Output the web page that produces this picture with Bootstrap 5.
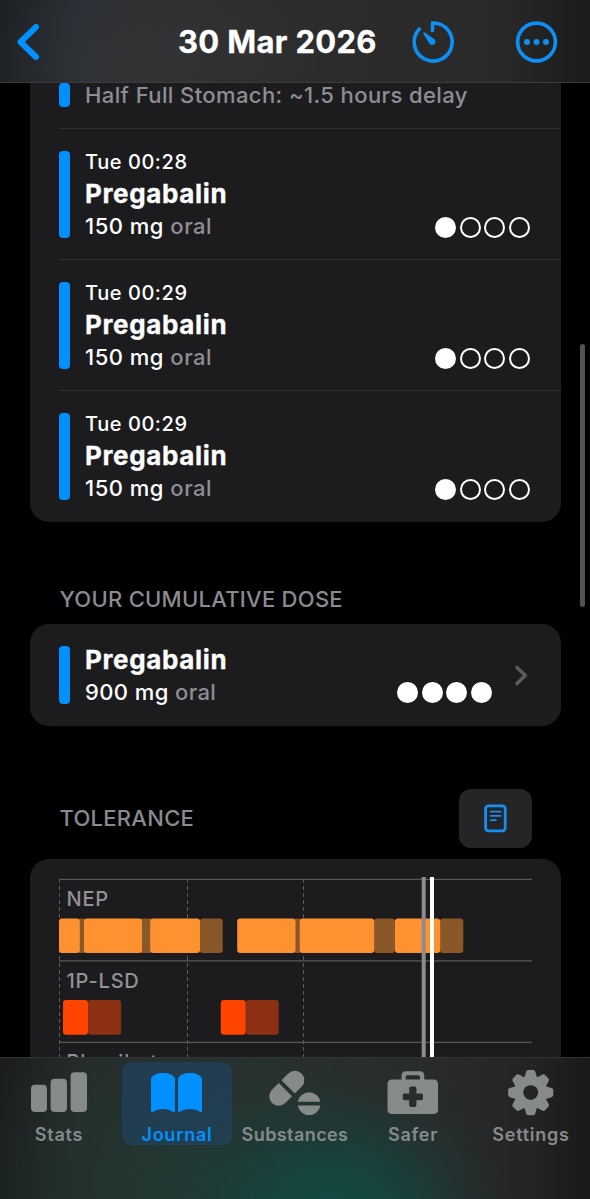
<!DOCTYPE html>
<html lang="en" data-bs-theme="dark">
<head>
<meta charset="utf-8">
<meta name="viewport" content="width=device-width, initial-scale=1">
<title>30 Mar 2026</title>
<link href="https://cdn.jsdelivr.net/npm/bootstrap@5.3.0/dist/css/bootstrap.min.css" rel="stylesheet">
<style>
  body { font-family: Inter, "Liberation Sans", sans-serif; background: #000; color: #fff; height: 1199px; overflow: hidden; }
  svg { display: block; flex: none; }
  .topbar { height: 83px; flex: none; border-bottom: 1px solid #3b3b3c;
    background: radial-gradient(ellipse 190px 110px at 145px 65px, rgba(60,60,60,.4), transparent),
      linear-gradient(90deg, #1c1f22 0, #22272c 40px, #292e35 78px, #2d2e31 125px, #2d2d2e 240px, #2b2b2c 400px, #292929 500px, #1b1b1c 590px); }
  .topbar h1 { font-size: 31px; font-weight: 700; line-height: 38px; letter-spacing: .33px; width: 200px; margin-left: 137px; padding-top: 1px; white-space: nowrap; -webkit-text-stroke: .3px #fff; }
  .scroller { flex: 1 1 0; min-height: 0; overflow: hidden; padding: 0 29px 0 30px; }
  .panel { background: #1c1c1e; border-radius: 19px; }
  .panel-cut { border-radius: 0 0 19px 19px; height: 439px; }
  .entry { margin-left: 29px; padding: 16px 31px 15px 0; height: 131px; border-top: 1px solid #303033; }
  .stripe { width: 11px; border-radius: 4px; background: #0091ff; flex: none; }
  .txt { margin-left: 15px; line-height: 33px; white-space: nowrap; }
  .when { font-size: 20px; letter-spacing: .56px; font-weight: 500; padding-top: 1px; margin-bottom: -2px; }
  .what { font-size: 26px; font-weight: 700; letter-spacing: .65px; -webkit-text-stroke: .3px #fff; }
  .dose { font-size: 22px; font-weight: 500; letter-spacing: .5px; }
  .note { letter-spacing: .4px; }
  .dim { color: #8e8e93; }
  .dots { gap: 3.6px; }
  .dots i { width: 21px; height: 21px; border: 2.4px solid #fff; border-radius: 50%; }
  .dots i.on { background: #fff; }
  .entry .dots { margin-bottom: 6px; }
  .sect { font-size: 22px; font-weight: 500; letter-spacing: .27px; color: #8a8a8f; line-height: 28px; white-space: nowrap; margin-left: 29.5px; }
  .notebtn { width: 73px; height: 59px; border-radius: 12px; background: #252528; border: 0; }
  .tabs { height: 142px; flex: none; border-top: 1px solid #333435; padding-top: 4px;
    background: radial-gradient(ellipse 170px 130px at 335px 155px, #104b43 0, rgba(17,74,67,.8) 30%, rgba(20,66,60,.3) 70%, transparent),
      radial-gradient(ellipse 290px 190px at 215px 125px, rgba(32,60,54,.85), transparent),
      linear-gradient(90deg, #1a1a1c 0, #262929 80px, #2a2c2c 220px, #292a2b 440px, #242425 530px, #19191a 590px); }
  .tab { width: 118px; height: 83px; color: #868a8a; font-size: 18px; font-weight: 600; line-height: 22px; letter-spacing: .75px; }
  .tab svg { height: 58px; width: 110px; }
  .tab span { white-space: nowrap; margin-top: 4px; }
  .tab .long { letter-spacing: .42px; }
  .tab-on { color: #0091ff; width: 110px; margin: 0 4px; border-radius: 9px; background: rgba(33,68,99,.63); }
  .thumb { position: absolute; left: 580px; top: 344px; width: 5px; height: 263px; border-radius: 3px; background: #525254; }
</style>
</head>
<body class="d-flex flex-column m-0 position-relative">
<header class="topbar d-flex align-items-center">
  <svg width="41" height="83" viewBox="0 0 41 83"><path d="M36 27 20.5 42 36 57" fill="none" stroke="#0091ff" stroke-width="6" stroke-linecap="round" stroke-linejoin="round"/></svg>
  <h1 class="mb-0">30 Mar 2026</h1>
  <svg width="212" height="83" viewBox="378 0 212 83" fill="none" stroke="#0d90f5" stroke-width="3.6">
    <path d="M419.3 29A19 19 0 1 0 432.5 23V30.5" stroke-linecap="round" stroke-linejoin="round"/>
    <path d="M423.5 32.4Q422.8 33.2 423.6 34.2L429.4 43.4Q431.2 46 434 44.6 436.5 42.4 435 39.8L425 32.5Q424 31.9 423.5 32.4Z" fill="#0d90f5" stroke="none"/>
    <circle cx="536.5" cy="42" r="18.9"/>
    <g fill="#0d90f5" stroke="none"><circle cx="527" cy="42" r="3"/><circle cx="536.5" cy="42" r="3"/><circle cx="546" cy="42" r="3"/></g>
  </svg>
</header>

<main class="scroller">
  <section class="panel panel-cut">
    <div class="d-flex" style="height:45px;margin-left:29px">
      <div class="stripe" style="height:24px"></div>
      <div class="txt dose note dim" style="margin-top:-4px">Half Full Stomach: ~1.5 hours delay</div>
    </div>
    <div class="entry d-flex">
      <div class="stripe" style="height:87px;margin-top:6px"></div>
      <div class="txt"><div class="when">Tue 00:28</div><div class="what">Pregabalin</div><div class="dose">150 mg <span class="dim">oral</span></div></div>
      <div class="dots d-flex ms-auto align-self-end"><i class="on"></i><i></i><i></i><i></i></div>
    </div>
    <div class="entry d-flex">
      <div class="stripe" style="height:87px;margin-top:6px"></div>
      <div class="txt"><div class="when">Tue 00:29</div><div class="what">Pregabalin</div><div class="dose">150 mg <span class="dim">oral</span></div></div>
      <div class="dots d-flex ms-auto align-self-end"><i class="on"></i><i></i><i></i><i></i></div>
    </div>
    <div class="entry d-flex">
      <div class="stripe" style="height:87px;margin-top:6px"></div>
      <div class="txt"><div class="when">Tue 00:29</div><div class="what">Pregabalin</div><div class="dose">150 mg <span class="dim">oral</span></div></div>
      <div class="dots d-flex ms-auto align-self-end"><i class="on"></i><i></i><i></i><i></i></div>
    </div>
  </section>

  <div class="sect" style="padding-top:63px;padding-bottom:11px">YOUR CUMULATIVE DOSE</div>
  <section class="panel d-flex" style="height:102px;padding:19px 29px 0 29px">
    <div class="stripe" style="height:58px;margin-top:3px"></div>
    <div class="txt"><div class="what">Pregabalin</div><div class="dose" style="letter-spacing:.4px">900 mg <span class="dim">oral</span></div></div>
    <div class="dots d-flex ms-auto" style="margin-top:39px"><i class="on"></i><i class="on"></i><i class="on"></i><i class="on"></i></div>
    <svg width="40" height="66" viewBox="492 643 40 66"><path d="M517 667.5 525.3 675.5 517 683.5" fill="none" stroke="#5b5b5e" stroke-width="3.6" stroke-linecap="round" stroke-linejoin="round"/></svg>
  </section>

  <div class="d-flex align-items-center justify-content-between" style="padding:63px 29px 11px 0">
    <div class="sect" style="padding-bottom:2px">TOLERANCE</div>
    <button class="notebtn d-flex align-items-center justify-content-center p-0">
      <svg width="23" height="29" viewBox="0 0 23 29" fill="none" stroke="#148ff2" stroke-linecap="round"><rect x="1.6" y="1.8" width="19.6" height="25" rx="2.8" stroke-width="2.8"/><path d="M6.6 7.6H16.6M6.6 11.9H16.6M6.6 16.2H11.8" stroke-width="1.8"/></svg>
    </button>
  </div>

  <section class="panel">
    <svg width="531" height="240" viewBox="30 859 531 240" font-size="20" font-weight="500" letter-spacing=".8">
      <path d="M59 879.3H532M59 960.8H532M59 1042.3H532" stroke="#58585b" stroke-width="1.2"/>
      <path d="M59.5 879V1099M187.5 879V1099M303.5 879V1099" stroke="#5c5c5f" stroke-width="1" stroke-dasharray="4 3"/>
      <g fill="#8a5728">
        <rect x="78" y="918.5" width="8" height="34.5" rx="2"/><rect x="140" y="918.5" width="12" height="34.5" rx="2"/><rect x="200" y="918.5" width="22.7" height="34.5" rx="3"/>
        <rect x="294" y="918.5" width="7" height="34.5" rx="2"/><rect x="374" y="918.5" width="21" height="34.5" rx="3"/><rect x="440" y="918.5" width="23.3" height="34.5" rx="3"/>
      </g>
      <g fill="#ff9230">
        <rect x="59" y="918.5" width="20.8" height="34.5" rx="3"/><rect x="84" y="918.5" width="58" height="34.5" rx="3"/><rect x="150.2" y="918.5" width="49.8" height="34.5" rx="3"/>
        <rect x="237.2" y="918.5" width="58.3" height="34.5" rx="3"/><rect x="299.7" y="918.5" width="74.5" height="34.5" rx="3"/><rect x="395" y="918.5" width="45.2" height="34.5" rx="3"/>
      </g>
      <g fill="#8c3014"><rect x="88" y="1000" width="33.2" height="34.8" rx="3"/><rect x="245.5" y="1000" width="33.2" height="34.8" rx="3"/></g>
      <g fill="#ff4500"><rect x="63" y="1000" width="25" height="34.8" rx="3"/><rect x="220.8" y="1000" width="24.8" height="34.8" rx="3"/></g>
      <g fill="#929297"><text x="66.5" y="905.5">NEP</text><text x="66.5" y="987.5">1P-LSD</text><text x="66.5" y="1069">Phenibut</text></g>
      <path d="M423.7 877V1099" stroke="#8d8d91" stroke-width="4"/><path d="M432 877V1099" stroke="#fff" stroke-width="4"/>
    </svg>
  </section>
</main>

<nav class="tabs d-flex align-items-start">
  <div class="tab d-flex flex-column align-items-center">
    <svg viewBox="4 1062 110 58" fill="currentColor"><rect x="31" y="1084.7" width="16" height="27.3" rx="4"/><rect x="50.6" y="1078.7" width="16.4" height="33.3" rx="4"/><rect x="70.6" y="1072.2" width="16.4" height="39.8" rx="4"/></svg>
    <span>Stats</span>
  </div>
  <div class="tab tab-on d-flex flex-column align-items-center">
    <svg viewBox="122 1062 110 58" fill="currentColor"><path d="M151 1078.5C152.5 1075 157 1073 163 1073S173.5 1075 175 1078.5V1111Q174.8 1112.6 173.3 1111.9C167 1107.9 159 1107.9 152.7 1111.9Q151.2 1112.6 151 1111Z"/><path d="M178 1078.5C179.5 1075 184 1073 190 1073S200.5 1075 202 1078.5V1111Q201.8 1112.6 200.3 1111.9C194 1107.9 186 1107.9 179.7 1111.9Q178.2 1112.6 178 1111Z"/></svg>
    <span>Journal</span>
  </div>
  <div class="tab d-flex flex-column align-items-center">
    <svg viewBox="240 1062 110 58" fill="currentColor"><g transform="translate(286.8 1088.3) rotate(-45)"><path d="M-1.9-9.4V9.4H-11.5A9.4 9.4 0 0 1-11.5-9.4Z"/><path d="M1.9-9.4V9.4H11.5A9.4 9.4 0 0 0 11.5-9.4Z"/></g><path d="M297.7 1101.7A11.6 11.6 0 0 1 320.5 1101.7ZM297.7 1105.6A11.6 11.6 0 0 0 320.5 1105.6Z"/></svg>
    <span class="long">Substances</span>
  </div>
  <div class="tab d-flex flex-column align-items-center">
    <svg viewBox="358 1062 110 58" fill="currentColor" fill-rule="evenodd"><path d="M392 1079.5H401.5V1076Q401.5 1071.3 406 1071.3H420Q424.3 1071.3 424.3 1076V1079.5H433.5Q438 1079.5 438 1084V1109.5Q438 1114 433.5 1114H392Q387.5 1114 387.5 1109.5V1084Q387.5 1079.5 392 1079.5ZM405.7 1079.5H420V1076.8Q420 1075.2 418.4 1075.2H407.3Q405.7 1075.2 405.7 1076.8ZM411 1086.6Q409.2 1086.6 409.2 1088.4V1093.4H404.4Q402.7 1093.4 402.7 1095V1098.6Q402.7 1100.3 404.4 1100.3H409.2V1105.2Q409.2 1107 411 1107H414.6Q416.4 1107 416.4 1105.2V1100.3H421.3Q423 1100.3 423 1098.6V1095Q423 1093.4 421.3 1093.4H416.4V1088.4Q416.4 1086.6 414.6 1086.6Z"/></svg>
    <span>Safer</span>
  </div>
  <div class="tab d-flex flex-column align-items-center">
    <svg viewBox="476 1062 110 58"><defs><mask id="hub" maskUnits="userSpaceOnUse" x="-25" y="-25" width="50" height="50"><rect x="-25" y="-25" width="50" height="50" fill="#fff"/><circle r="7.4" fill="#000"/></mask><path id="tooth" d="M-6.3-15 L-4.6-20.8Q-4.1-22.6-2.5-22.6H2.5Q4.1-22.6 4.6-20.8L6.3-15Z"/></defs>
      <g transform="translate(530.7 1092.6)" fill="currentColor"><g mask="url(#hub)"><circle r="16.7"/><use href="#tooth"/><use href="#tooth" transform="rotate(45)"/><use href="#tooth" transform="rotate(90)"/><use href="#tooth" transform="rotate(135)"/><use href="#tooth" transform="rotate(180)"/><use href="#tooth" transform="rotate(225)"/><use href="#tooth" transform="rotate(270)"/><use href="#tooth" transform="rotate(315)"/></g></g></svg>
    <span>Settings</span>
  </div>
</nav>
<div class="thumb"></div>
<script src="https://cdn.jsdelivr.net/npm/bootstrap@5.3.0/dist/js/bootstrap.bundle.min.js"></script>
</body>
</html>
